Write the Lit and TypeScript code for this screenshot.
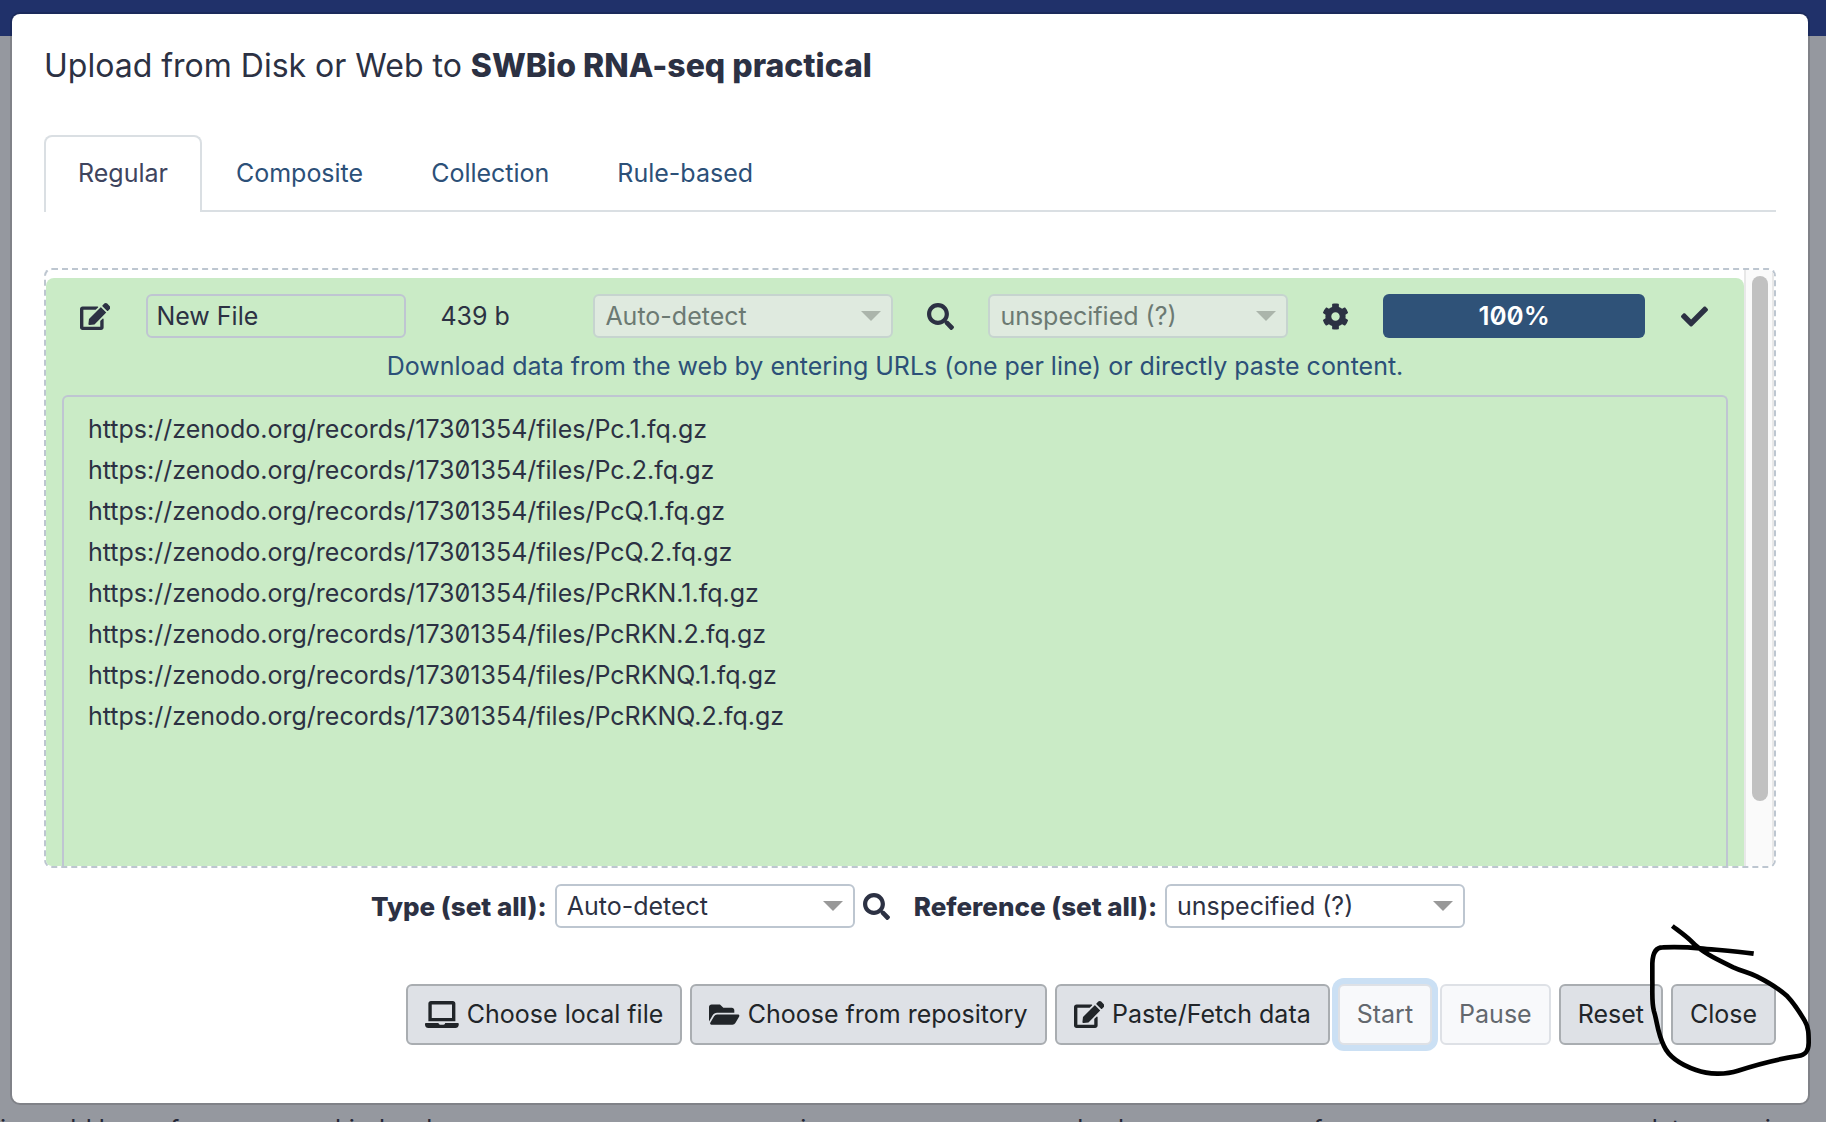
import { LitElement, html, css, svg } from "lit";
import { customElement } from "lit/decorators.js";

const ICONS: Record<string, { box: string; d: string }> = {
  edit: {
    box: "0 0 576 512",
    d: "M402.6 83.2l90.2 90.2c3.8 3.8 3.8 10 0 13.8L274.4 405.6l-92.8 10.3c-12.4 1.4-22.9-9.1-21.5-21.5l10.3-92.8L388.8 83.2c3.8-3.8 10-3.8 13.8 0zm162-22.9l-48.8-48.8c-15.2-15.2-39.9-15.2-55.2 0l-35.4 35.4c-3.8 3.8-3.8 10 0 13.8l90.2 90.2c3.8 3.8 10 3.8 13.8 0l35.4-35.4c15.2-15.3 15.2-40 0-55.2zM384 346.2V448H64V128h229.8c3.2 0 6.2-1.3 8.5-3.5l40-40c7.6-7.6 2.2-20.5-8.5-20.5H48C21.5 64 0 85.5 0 112v352c0 26.5 21.5 48 48 48h352c26.5 0 48-21.5 48-48V306.2c0-10.7-12.9-16-20.5-8.5l-40 40c-2.2 2.3-3.5 5.3-3.5 8.5z",
  },
  search: {
    box: "0 0 512 512",
    d: "M505 442.7L405.3 343c-4.5-4.5-10.6-7-17-7H372c27.6-35.3 44-79.7 44-128C416 93.1 322.9 0 208 0S0 93.1 0 208s93.1 208 208 208c48.3 0 92.7-16.4 128-44v16.3c0 6.4 2.5 12.5 7 17l99.7 99.7c9.4 9.4 24.6 9.4 33.9 0l28.3-28.3c9.4-9.4 9.4-24.6.1-34zM208 336c-70.7 0-128-57.2-128-128 0-70.7 57.2-128 128-128 70.7 0 128 57.2 128 128 0 70.7-57.2 128-128 128z",
  },
  cog: {
    box: "0 0 512 512",
    d: "M487.4 315.7l-42.6-24.6c4.3-23.2 4.3-47 0-70.2l42.6-24.6c4.9-2.8 7.1-8.6 5.5-14-11.1-35.6-30-67.8-54.7-94.6-3.8-4.1-10-5.1-14.8-2.3L380.8 110c-17.9-15.4-38.5-27.3-60.8-35.1V25.8c0-5.6-3.9-10.5-9.4-11.7-36.7-8.2-74.3-7.8-109.2 0-5.5 1.2-9.4 6.1-9.4 11.7V75c-22.2 7.9-42.8 19.8-60.8 35.1L88.7 85.5c-4.9-2.8-11-1.9-14.8 2.3-24.7 26.7-43.6 58.9-54.7 94.6-1.7 5.4.6 11.2 5.5 14L67.3 221c-4.3 23.2-4.3 47 0 70.2l-42.6 24.6c-4.9 2.8-7.1 8.6-5.5 14 11.1 35.6 30 67.8 54.7 94.6 3.8 4.1 10 5.1 14.8 2.3l42.6-24.6c17.9 15.4 38.5 27.3 60.8 35.1v49.2c0 5.6 3.9 10.5 9.4 11.7 36.7 8.2 74.3 7.8 109.2 0 5.5-1.2 9.4-6.1 9.4-11.7v-49.2c22.2-7.9 42.8-19.8 60.8-35.1l42.6 24.6c4.9 2.8 11 1.9 14.8-2.3 24.7-26.7 43.6-58.9 54.7-94.6 1.5-5.5-.7-11.3-5.6-14.1zM256 336c-44.1 0-80-35.9-80-80s35.9-80 80-80 80 35.9 80 80-35.9 80-80 80z",
  },
  check: {
    box: "0 0 512 512",
    d: "M173.9 439.4l-166.4-166.4c-10-10-10-26.2 0-36.2l36.2-36.2c10-10 26.2-10 36.2 0L192 312.7 432.1 72.6c10-10 26.2-10 36.2 0l36.2 36.2c10 10 10 26.2 0 36.2l-294.4 294.4c-10 10-26.2 10-36.2 0z",
  },
  laptop: {
    box: "0 0 640 512",
    d: "M624 416H381.5c-.7 19.8-14.7 32-32.7 32H288c-18.7 0-33-17.5-32.8-32H16c-8.8 0-16 7.2-16 16v16c0 35.2 28.8 64 64 64h512c35.2 0 64-28.8 64-64v-16c0-8.8-7.2-16-16-16zM576 48c0-26.4-21.6-48-48-48H112C85.6 0 64 21.6 64 48v336h512V48zm-64 272H128V64h384v256z",
  },
  folder: {
    box: "0 0 576 512",
    d: "M572.7 292.1l-72.4 124.2A64 64 0 0 1 445 448H45c-18.5 0-30.1-20.1-20.7-36.1l72.4-124.2A64 64 0 0 1 152 256h400c18.5 0 30.1 20.1 20.7 36.1zM152 224h328v-48c0-26.5-21.5-48-48-48H272l-64-64H48C21.5 64 0 85.5 0 112v278.1l69.1-118.4C86.2 242.3 118 224 152 224z",
  },
};

const URLS = ["Pc.1", "Pc.2", "PcQ.1", "PcQ.2", "PcRKN.1", "PcRKN.2", "PcRKNQ.1", "PcRKNQ.2"]
  .map((name) => `https://zenodo.org/records/17301354/files/${name}.fq.gz`)
  .join("\n");

function icon(name: string) {
  const { box, d } = ICONS[name];
  return html`<svg class="icon ${name}" viewBox=${box} aria-hidden="true">${svg`<path d=${d}></path>`}</svg>`;
}

@customElement("app-root")
class AppRoot extends LitElement {
  static styles = css`
    :host {
      display: block;
      position: relative;
      height: 100vh;
      overflow: hidden;
      background: linear-gradient(#20316a 36px, #95989f 36px);
      color: #2c3143;
      font: 25px/41px Inter, "Liberation Sans", sans-serif;
      font-feature-settings: "zero";
    }
    .page {
      display: flex;
      flex-direction: column;
      box-sizing: border-box;
      height: 100%;
      padding: 14px 18px 0 12px;
    }
    .modal {
      display: flex;
      flex: 1 1 0;
      flex-direction: column;
      box-sizing: border-box;
      min-height: 0;
      padding: 31px 32px 58px;
      border-radius: 8px;
      background: #fff;
      box-shadow: 0 0 0 2px rgba(0, 0, 0, 0.14);
    }
    .behind {
      flex: none;
      height: 13px;
      margin: 6px -18px 0 -12px;
      overflow: hidden;
      white-space: nowrap;
      color: #252838;
    }
    .title { margin: 0 0 49px; font-size: 32px; line-height: 41px; font-weight: 400; }
    .title b { font-weight: 800; }
    .tabs { display: flex; border-bottom: 2px solid #dadfe3; }
    .tab {
      padding: 16px 32px;
      border: 2px solid transparent;
      border-bottom: 0;
      border-radius: 8px 8px 0 0;
      color: #2c5078;
      text-decoration: none;
    }
    .tab.active { margin-bottom: -2px; padding-bottom: 18px; border-color: #dadfe3; background: #fff; color: #3e445e; }
    .dropzone {
      display: flex;
      flex: 1 1 0;
      min-height: 0;
      margin-top: 56px;
      border: 2px dashed #bdc6d0;
      border-radius: 8px;
      overflow: hidden;
    }
    .upload {
      display: flex;
      flex: 1;
      flex-direction: column;
      min-width: 0;
      margin-top: 8px;
      padding: 16px 16px 0;
      border-radius: 8px 8px 0 0;
      background: #caebc6;
    }
    .row { display: flex; align-items: center; height: 44px; padding: 0 20px 0 18px; }
    .row .search, .row .cog { margin: 0 34px; }
    .track { flex: none; width: 26px; padding-top: 6px; border: solid #e8e8e8; border-width: 0 2px; background: #fafafa; }
    .thumb { width: 16px; height: 525px; margin-left: 6px; border-radius: 8px; background: #c1c1c1; }
    .icon { display: block; flex: none; height: 27px; fill: currentColor; }
    .name {
      box-sizing: border-box;
      width: 260px;
      height: 44px;
      margin: 0 34px;
      padding: 0 8px;
      border: 2px solid #bfc5d2;
      border-radius: 6px;
      background: transparent;
      color: inherit;
      font: inherit;
      font-feature-settings: inherit;
    }
    .row .edit { margin-right: 2px; }
    .size { width: 153px; }
    .progress {
      flex: 1;
      margin-right: 36px;
      border-radius: 6px;
      background: #2f5278;
      color: #fff;
      font-size: 26px;
      font-weight: 600;
      line-height: 44px;
      text-align: center;
    }
    .hint { margin: 8px 0; text-align: center; color: #2c5078; }
    .urls {
      flex: 1;
      box-sizing: border-box;
      width: 100%;
      margin: 0;
      padding: 12px 24px;
      border: 2px solid #bfc5d2;
      border-bottom: 0;
      border-radius: 6px 6px 0 0;
      background: transparent;
      color: inherit;
      font: inherit;
      font-feature-settings: inherit;
      resize: none;
      overflow: hidden;
    }
    .select { position: relative; flex: none; width: 300px; }
    .control {
      appearance: none;
      display: block;
      box-sizing: border-box;
      width: 100%;
      height: 44px;
      margin: 0;
      padding: 0 40px 0 10px;
      border: 2px solid #bdc6d0;
      border-radius: 6px;
      background: #fff;
      color: #2c3143;
      font: inherit;
      opacity: 1;
    }
    .caret {
      position: absolute;
      right: 12px;
      top: 17px;
      border: 10px solid transparent;
      border-top-color: #999;
      border-bottom-width: 0;
      pointer-events: none;
    }
    .control:disabled { background: #dfeadf; border-color: #c6d4cf; color: #6c7a73; }
    .control:disabled + .caret { border-top-color: #abb5ab; }
    .all { display: flex; align-items: center; justify-content: center; gap: 8px; margin-top: 16px; padding-left: 16px; }
    .label { font-size: 26px; font-weight: 800; }
    .all .search { margin-right: 16px; }
    .actions { display: flex; justify-content: flex-end; gap: 8px; margin-top: 56px; }
    .btn {
      display: flex;
      align-items: center;
      gap: 8px;
      height: 61px;
      margin: 0;
      padding: 0 17px;
      border: 2px solid #a9adb1;
      border-radius: 6px;
      background: #dee1e6;
      color: #212529;
      font: inherit;
    }
    .btn:disabled { border-color: #dee1e6; background: #f8f9fb; color: #63686e; }
    .btn.focused { box-shadow: 0 0 0 6px #cbe0f4; }
    .ink { position: absolute; right: 0; bottom: 32px; width: 186px; height: 180px; pointer-events: none; }
    .stroke { fill: none; stroke: #000; stroke-width: 14; stroke-linejoin: round; }
  `;

  private select(id: string, value: string, label = "") {
    return html`
      <span class="select">
        <select class="control" id=${id} aria-label=${label || value} ?disabled=${label !== ""}>
          <option>${value}</option>
        </select>
        <span class="caret"></span>
      </span>
    `;
  }

  render() {
    return html`
      <div class="page">
        <div class="modal" role="dialog" aria-labelledby="title">
          <h4 class="title" id="title">Upload from Disk or Web to <b>SWBio RNA-seq practical</b></h4>
          <nav class="tabs">
            <a class="tab active" href="#regular">Regular</a>
            <a class="tab" href="#composite">Composite</a>
            <a class="tab" href="#collection">Collection</a>
            <a class="tab" href="#rules">Rule-based</a>
          </nav>
          <section class="dropzone">
            <div class="upload">
              <div class="row">
                ${icon("edit")}
                <input class="name" aria-label="Name" value="New File" />
                <span class="size">439 b</span>
                ${this.select("file-type", "Auto-detect", "Type")}
                ${icon("search")}
                ${this.select("file-reference", "unspecified (?)", "Reference")}
                ${icon("cog")}
                <div class="progress">100%</div>
                ${icon("check")}
              </div>
              <label class="hint" for="urls">Download data from the web by entering URLs (one per line) or directly paste content.</label>
              <textarea class="urls" id="urls" .value=${URLS}></textarea>
            </div>
            <div class="track"><div class="thumb"></div></div>
          </section>
          <div class="all">
            <label class="label" for="all-type">Type (set all):</label>
            ${this.select("all-type", "Auto-detect")}
            ${icon("search")}
            <label class="label" for="all-reference">Reference (set all):</label>
            ${this.select("all-reference", "unspecified (?)")}
          </div>
          <div class="actions">
            <button class="btn">${icon("laptop")}Choose local file</button>
            <button class="btn">${icon("folder")}Choose from repository</button>
            <button class="btn">${icon("edit")}Paste/Fetch data</button>
            <button class="btn focused" disabled>Start</button>
            <button class="btn" disabled>Pause</button>
            <button class="btn">Reset</button>
            <button class="btn">Close</button>
          </div>
        </div>
        <p class="behind">is could be as from our own kind as he can ensure as we can reuse in areas we see as used, where one uses a few more runs on us as our data scan in a menu or as one can also serve as a source for us</p>
      </div>
      <svg class="ink" viewBox="0 0 558 540" aria-hidden="true">
        <path
          class="stroke"
          d="M97 48C118 64 138 78 152 92C188 130 235 150 280 172C306 184 324 187 350 199C378 213 416 235 442 259C466 284 482 312 494 332C506 352 506 372 506 398C506 420 500 434 474 438C420 446 350 464 294 482C258 494 206 494 168 480C122 464 88 444 72 408C52 368 52 336 42 304C34 276 38 240 37 208L37 160C38 130 46 112 68 112C100 111 150 112 180 115C230 120 280 122 341 131"
        ></path>
      </svg>
    `;
  }
}
